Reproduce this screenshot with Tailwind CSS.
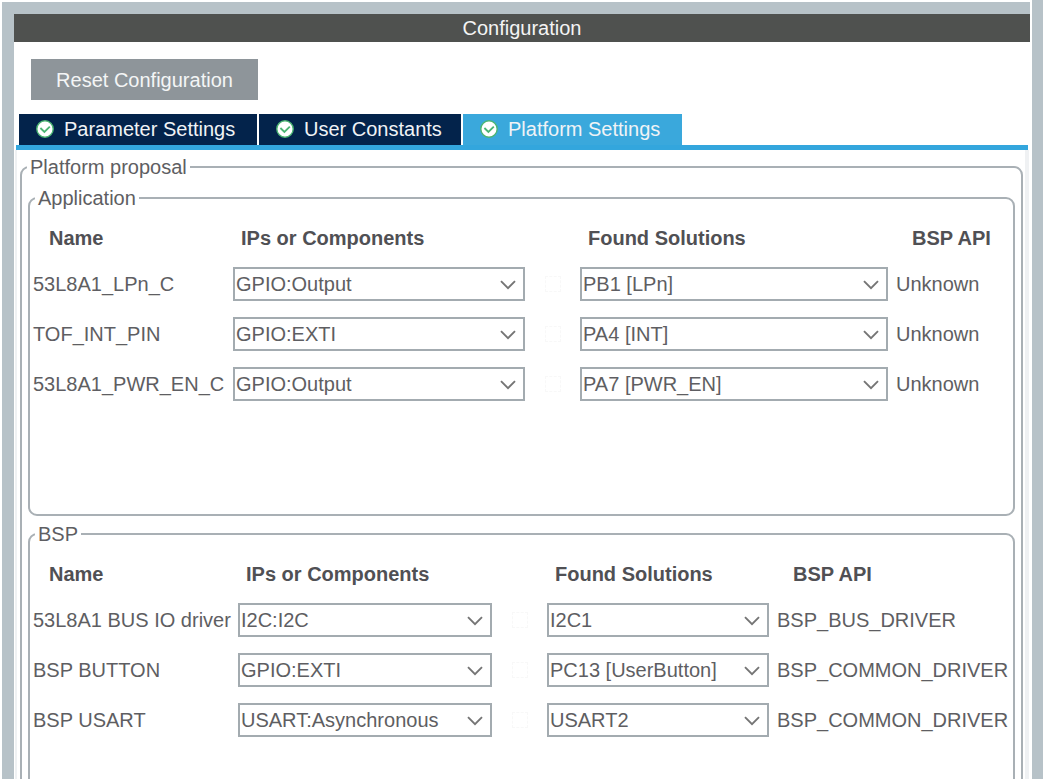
<!DOCTYPE html>
<html lang="en">
<head>
<meta charset="utf-8">
<title>Configuration</title>
<script src="https://cdn.jsdelivr.net/npm/@tailwindcss/browser@4"></script>
</head>
<body class="bg-white">
<svg class="hidden" aria-hidden="true">
  <symbol id="check" viewBox="0 0 18 18"><circle cx="9" cy="9" r="8.2" fill="#fff" stroke="#4cb573" stroke-width="1.4"/><path d="M4.4 8l4 4 5.4-5.4" fill="none" stroke="#4cb573" stroke-width="1.8"/></symbol>
  <symbol id="chevron" viewBox="0 0 16 10"><path d="M1 1.2l7 7 7-7" fill="none" stroke="#757575" stroke-width="1.9"/></symbol>
</svg>
<div class="flex h-screen flex-col overflow-hidden pt-[2px] pl-[2px] font-['Liberation_Sans',Arial,sans-serif] text-[20px] leading-[24px] text-[#5e5e62]">
  <div class="flex min-h-0 flex-1 border-l-[12px] border-[#b7c2c8]">
    <main class="flex min-w-0 flex-1 flex-col">
      <div class="border-t-[12px] border-[#b7c2c8]">
        <h1 class="h-[28px] bg-[#4f514f] pt-[2px] text-center text-[#f4f4f4]">Configuration</h1>
      </div>
      <div class="px-[17px] pt-[17px]">
        <button type="button" class="block h-[41px] w-[227px] bg-[#8e959a] text-[#f4f5f6]">Reset Configuration</button>
      </div>
      <div role="tablist" class="mx-[2px] mt-[14px] flex gap-[2px] border-b-[5px] border-[#33a6dd] pl-[3px] text-[#f0f3f6]">
        <button type="button" role="tab" class="flex h-[31px] w-[238px] items-center gap-[10px] bg-[#03234b] pb-[2px] pl-[17px]"><svg class="size-[18px] shrink-0"><use href="#check"/></svg>Parameter Settings</button>
        <button type="button" role="tab" class="flex h-[31px] w-[202px] items-center gap-[10px] bg-[#03234b] pb-[2px] pl-[17px]"><svg class="size-[18px] shrink-0"><use href="#check"/></svg>User Constants</button>
        <button type="button" role="tab" aria-selected="true" class="flex h-[31px] w-[219px] items-center gap-[10px] bg-[#3aa8dc] pb-[2px] pl-[17px]"><svg class="size-[18px] shrink-0"><use href="#check"/></svg>Platform Settings</button>
      </div>
      <div class="mr-[1px] ml-[1px] min-h-0 flex-1 border-r-[4px] border-l-[2px] border-[#eff1f3] pt-[5px] pr-[2px] pl-[3px]">
        <fieldset class="min-w-0 rounded-[9px] border-2 border-[#a9b0b5] px-[6px] pt-[7px] pb-[6px]">
          <legend class="-ml-[1px] px-[3px]">Platform proposal</legend>
          <fieldset class="min-w-0 rounded-[9px] border-2 border-[#a9b0b5] px-[3px] pt-[6px] pb-[105px]">
            <legend class="ml-[2px] px-[3px]">Application</legend>
            <table class="w-full table-fixed text-left whitespace-nowrap">
              <colgroup><col class="w-[200px]"><col class="w-[292px]"><col class="w-[55px]"><col class="w-[308px]"><col></colgroup>
              <thead>
                <tr class="h-[43px] text-[#505054]"><th class="pl-[16px]">Name</th><th class="pl-[8px]">IPs or Components</th><td></td><th class="pl-[8px]">Found Solutions</th><th class="pl-[24px]">BSP API</th></tr>
              </thead>
              <tbody>
                <tr class="h-[50px]">
                  <td>53L8A1_LPn_C</td>
                  <td><div class="relative"><select aria-label="Component for 53L8A1_LPn_C" class="block h-[34px] w-full appearance-none border-2 border-[#a3abb0] bg-white pl-[1px]"><option>GPIO:Output</option></select><svg class="pointer-events-none absolute top-[13px] right-[9px] h-[10px] w-[16px]"><use href="#chevron"/></svg></div></td>
                  <td class="pl-[20px]"><input type="checkbox" disabled aria-label="53L8A1_LPn_C status" class="block size-[16px] appearance-none border border-dashed border-[#f8f8f8]"></td>
                  <td><div class="relative"><select aria-label="Solution for 53L8A1_LPn_C" class="block h-[34px] w-full appearance-none border-2 border-[#a3abb0] bg-white pl-[1px]"><option>PB1 [LPn]</option></select><svg class="pointer-events-none absolute top-[13px] right-[9px] h-[10px] w-[16px]"><use href="#chevron"/></svg></div></td>
                  <td class="pl-[8px]">Unknown</td>
                </tr>
                <tr class="h-[50px]">
                  <td>TOF_INT_PIN</td>
                  <td><div class="relative"><select aria-label="Component for TOF_INT_PIN" class="block h-[34px] w-full appearance-none border-2 border-[#a3abb0] bg-white pl-[1px]"><option>GPIO:EXTI</option></select><svg class="pointer-events-none absolute top-[13px] right-[9px] h-[10px] w-[16px]"><use href="#chevron"/></svg></div></td>
                  <td class="pl-[20px]"><input type="checkbox" disabled aria-label="TOF_INT_PIN status" class="block size-[16px] appearance-none border border-dashed border-[#f8f8f8]"></td>
                  <td><div class="relative"><select aria-label="Solution for TOF_INT_PIN" class="block h-[34px] w-full appearance-none border-2 border-[#a3abb0] bg-white pl-[1px]"><option>PA4 [INT]</option></select><svg class="pointer-events-none absolute top-[13px] right-[9px] h-[10px] w-[16px]"><use href="#chevron"/></svg></div></td>
                  <td class="pl-[8px]">Unknown</td>
                </tr>
                <tr class="h-[50px]">
                  <td>53L8A1_PWR_EN_C</td>
                  <td><div class="relative"><select aria-label="Component for 53L8A1_PWR_EN_C" class="block h-[34px] w-full appearance-none border-2 border-[#a3abb0] bg-white pl-[1px]"><option>GPIO:Output</option></select><svg class="pointer-events-none absolute top-[13px] right-[9px] h-[10px] w-[16px]"><use href="#chevron"/></svg></div></td>
                  <td class="pl-[20px]"><input type="checkbox" disabled aria-label="53L8A1_PWR_EN_C status" class="block size-[16px] appearance-none border border-dashed border-[#f8f8f8]"></td>
                  <td><div class="relative"><select aria-label="Solution for 53L8A1_PWR_EN_C" class="block h-[34px] w-full appearance-none border-2 border-[#a3abb0] bg-white pl-[1px]"><option>PA7 [PWR_EN]</option></select><svg class="pointer-events-none absolute top-[13px] right-[9px] h-[10px] w-[16px]"><use href="#chevron"/></svg></div></td>
                  <td class="pl-[8px]">Unknown</td>
                </tr>
              </tbody>
            </table>
          </fieldset>
          <fieldset class="mt-[6px] min-w-0 rounded-[9px] border-2 border-[#a9b0b5] px-[3px] pt-[6px] pb-[105px]">
            <legend class="ml-[2px] px-[3px]">BSP</legend>
            <table class="w-full table-fixed text-left whitespace-nowrap">
              <colgroup><col class="w-[205px]"><col class="w-[254px]"><col class="w-[55px]"><col class="w-[222px]"><col></colgroup>
              <thead>
                <tr class="h-[43px] text-[#505054]"><th class="pl-[16px]">Name</th><th class="pl-[8px]">IPs or Components</th><td></td><th class="pl-[8px]">Found Solutions</th><th class="pl-[24px]">BSP API</th></tr>
              </thead>
              <tbody>
                <tr class="h-[50px]">
                  <td>53L8A1 BUS IO driver</td>
                  <td><div class="relative"><select aria-label="Component for 53L8A1 BUS IO driver" class="block h-[34px] w-full appearance-none border-2 border-[#a3abb0] bg-white pl-[1px]"><option>I2C:I2C</option></select><svg class="pointer-events-none absolute top-[13px] right-[9px] h-[10px] w-[16px]"><use href="#chevron"/></svg></div></td>
                  <td class="pl-[20px]"><input type="checkbox" disabled aria-label="53L8A1 BUS IO driver status" class="block size-[16px] appearance-none border border-dashed border-[#f8f8f8]"></td>
                  <td><div class="relative"><select aria-label="Solution for 53L8A1 BUS IO driver" class="block h-[34px] w-full appearance-none border-2 border-[#a3abb0] bg-white pl-[1px]"><option>I2C1</option></select><svg class="pointer-events-none absolute top-[13px] right-[9px] h-[10px] w-[16px]"><use href="#chevron"/></svg></div></td>
                  <td class="pl-[8px]">BSP_BUS_DRIVER</td>
                </tr>
                <tr class="h-[50px]">
                  <td>BSP BUTTON</td>
                  <td><div class="relative"><select aria-label="Component for BSP BUTTON" class="block h-[34px] w-full appearance-none border-2 border-[#a3abb0] bg-white pl-[1px]"><option>GPIO:EXTI</option></select><svg class="pointer-events-none absolute top-[13px] right-[9px] h-[10px] w-[16px]"><use href="#chevron"/></svg></div></td>
                  <td class="pl-[20px]"><input type="checkbox" disabled aria-label="BSP BUTTON status" class="block size-[16px] appearance-none border border-dashed border-[#f8f8f8]"></td>
                  <td><div class="relative"><select aria-label="Solution for BSP BUTTON" class="block h-[34px] w-full appearance-none border-2 border-[#a3abb0] bg-white pl-[1px]"><option>PC13 [UserButton]</option></select><svg class="pointer-events-none absolute top-[13px] right-[9px] h-[10px] w-[16px]"><use href="#chevron"/></svg></div></td>
                  <td class="pl-[8px]">BSP_COMMON_DRIVER</td>
                </tr>
                <tr class="h-[50px]">
                  <td>BSP USART</td>
                  <td><div class="relative"><select aria-label="Component for BSP USART" class="block h-[34px] w-full appearance-none border-2 border-[#a3abb0] bg-white pl-[1px]"><option>USART:Asynchronous</option></select><svg class="pointer-events-none absolute top-[13px] right-[9px] h-[10px] w-[16px]"><use href="#chevron"/></svg></div></td>
                  <td class="pl-[20px]"><input type="checkbox" disabled aria-label="BSP USART status" class="block size-[16px] appearance-none border border-dashed border-[#f8f8f8]"></td>
                  <td><div class="relative"><select aria-label="Solution for BSP USART" class="block h-[34px] w-full appearance-none border-2 border-[#a3abb0] bg-white pl-[1px]"><option>USART2</option></select><svg class="pointer-events-none absolute top-[13px] right-[9px] h-[10px] w-[16px]"><use href="#chevron"/></svg></div></td>
                  <td class="pl-[8px]">BSP_COMMON_DRIVER</td>
                </tr>
              </tbody>
            </table>
          </fieldset>
        </fieldset>
      </div>
    </main>
    <div class="-mt-[2px] ml-[2px] w-[11px] bg-[#b7c2c8]"></div>
  </div>
</div>
</body>
</html>
